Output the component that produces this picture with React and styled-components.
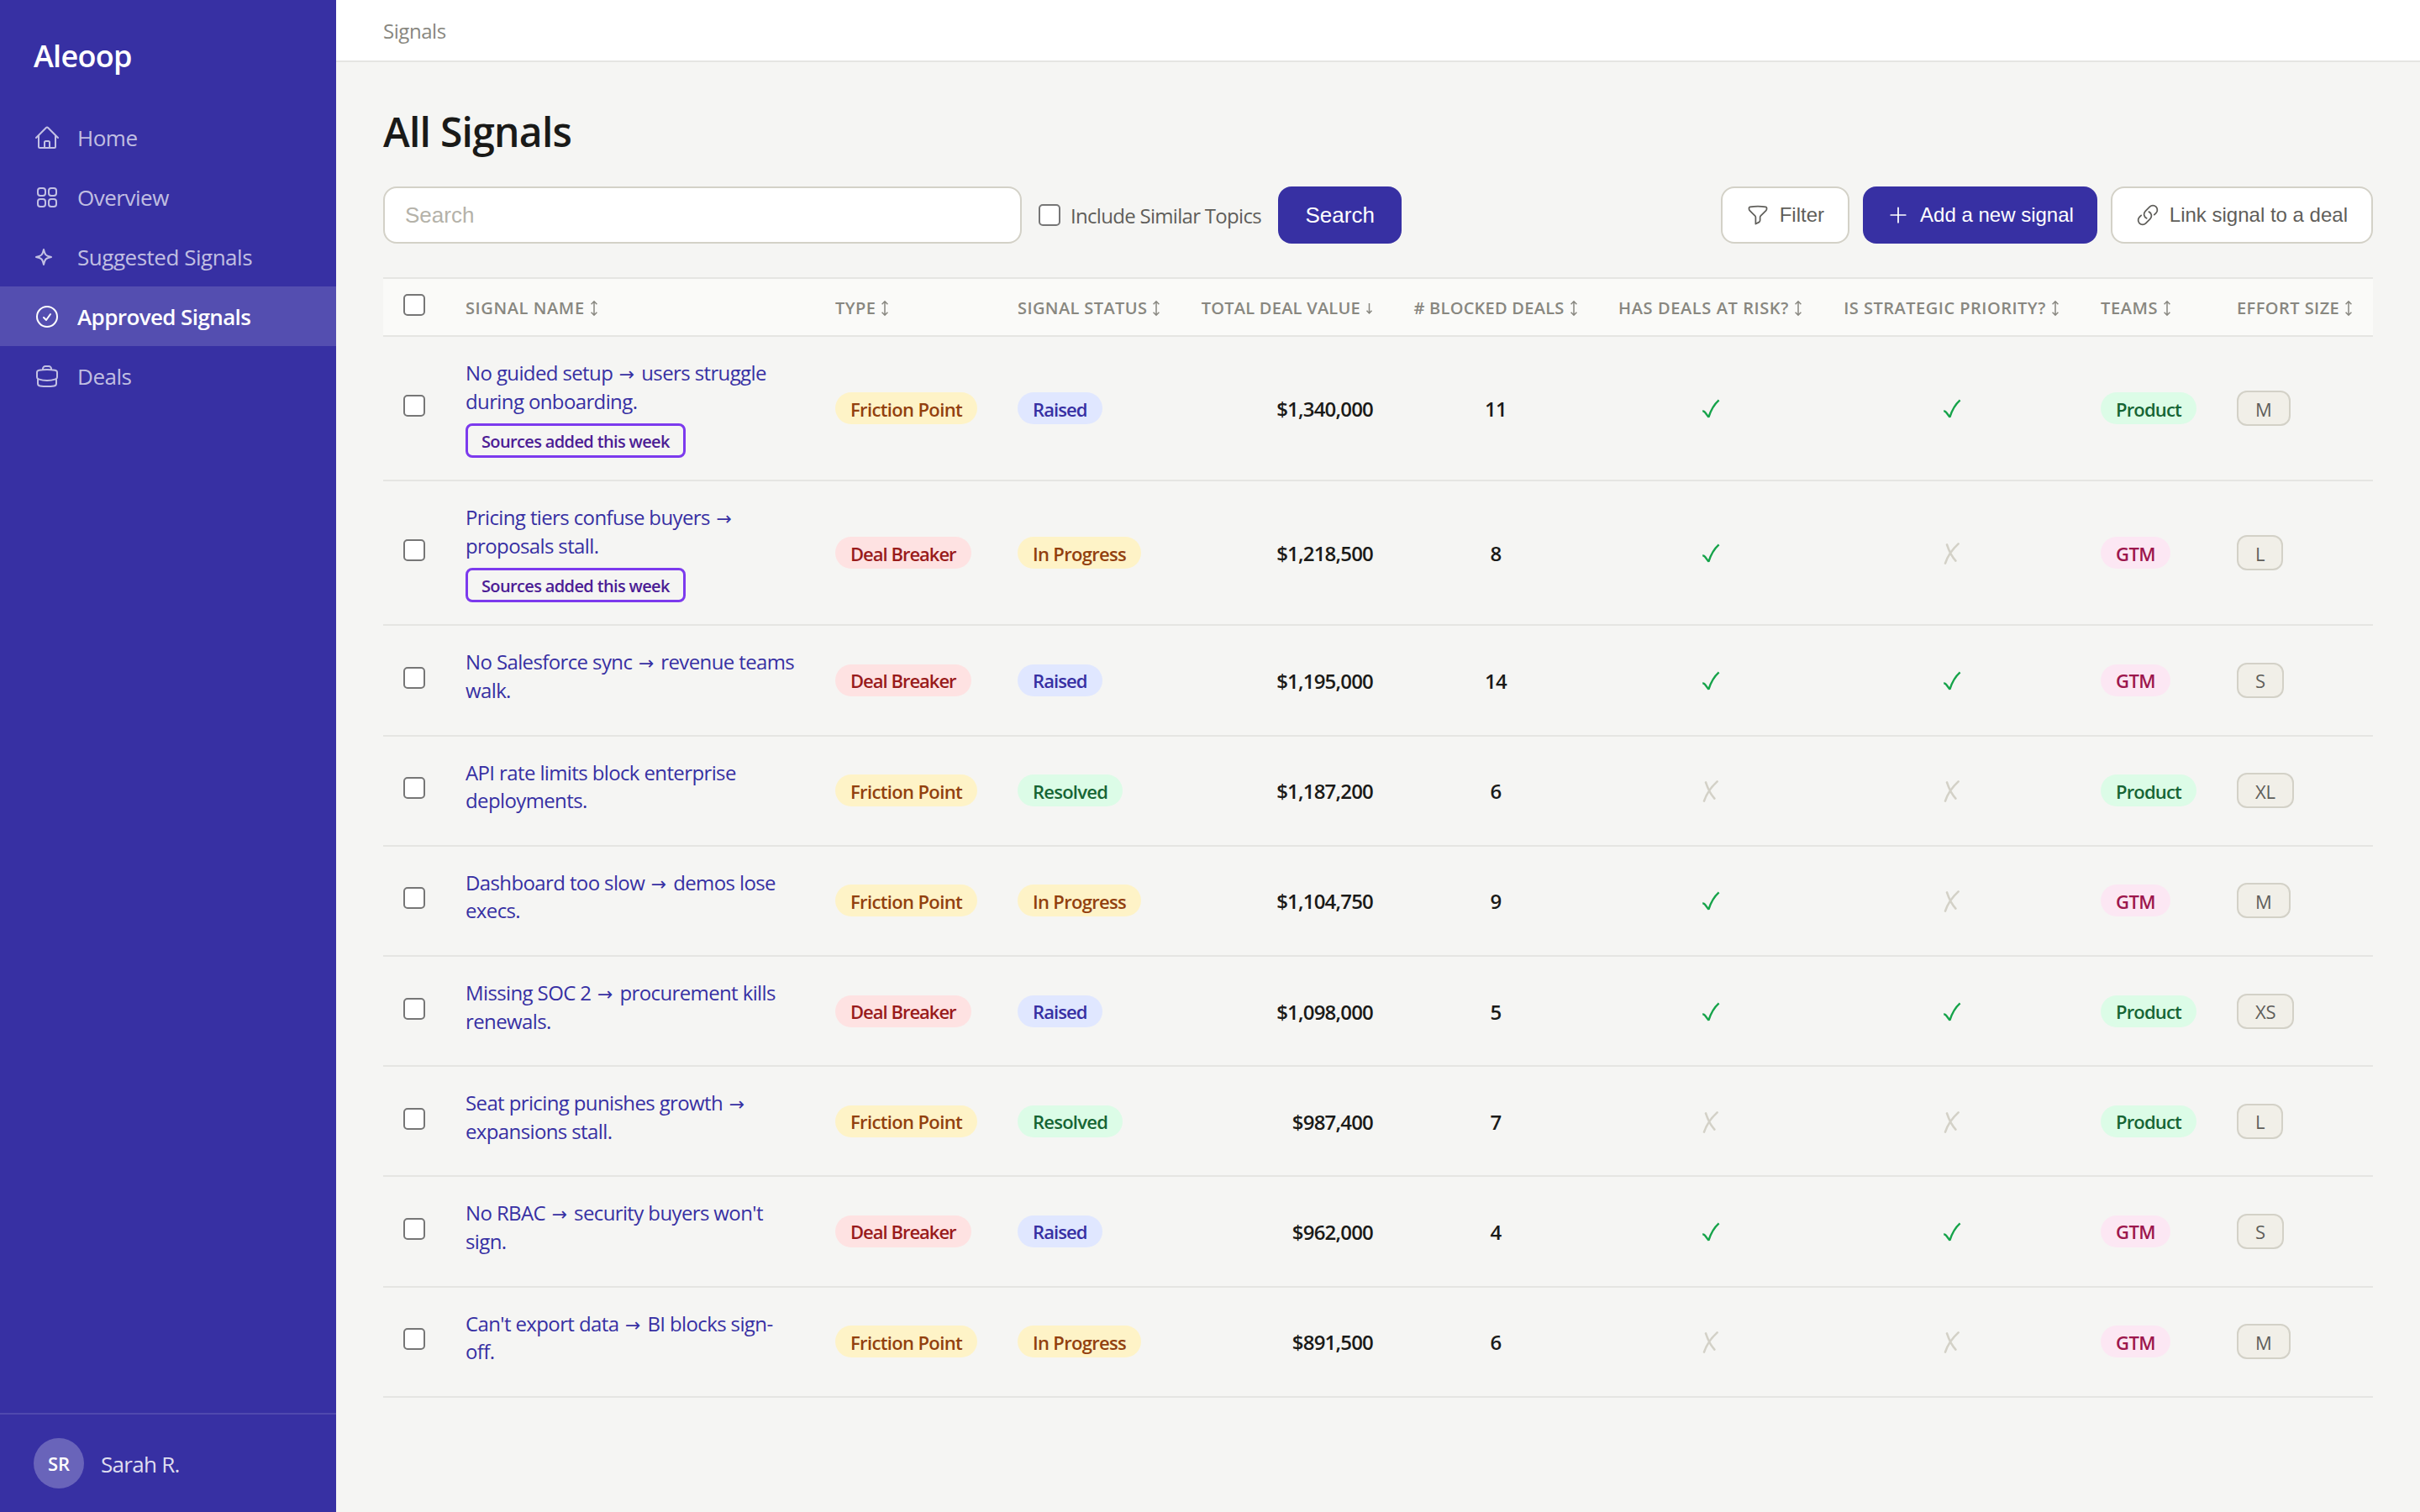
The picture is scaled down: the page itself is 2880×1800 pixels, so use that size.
import React, { useState } from 'react'
import styled, { createGlobalStyle } from 'styled-components'
import { HiOutlineHome, HiOutlineSquares2X2, HiOutlineCheckCircle, HiOutlineFunnel, HiOutlinePlus, HiOutlineLink } from 'react-icons/hi2'

const GlobalStyle = createGlobalStyle`
    * { box-sizing: border-box; }
    body {
        margin: 0;
        background: #f5f5f3;
        color: #1a1a18;
        font-family: "Open Sans", "Noto Sans", sans-serif;
        font-size: 24px;
    }
`;

const Layout = styled.div`
    display: flex;
    height: 1800px;
`;
const Sidebar = styled.aside`
    display: flex;
    flex-direction: column;
    flex: none;
    width: 400px;
    background: #3730a3;
    color: white;
`;
const Brand = styled.div`
    padding: 41px 40px 0;
    height: 128px;
    font-size: 36px;
    font-weight: 600;
    line-height: 52px;
    letter-spacing: -0.7px;
`;
const Nav = styled.nav`
    flex: 1;
`;
const NavItem = styled.a`
    display: flex;
    align-items: center;
    gap: 20px;
    height: 71px;
    padding: 0 40px;
    font-size: 26px;
    font-weight: ${p => p.$active ? 600 : 400};
    letter-spacing: ${p => p.$active ? '-0.6px' : '-0.48px'};
    color: ${p => p.$active ? 'white' : 'rgba(255, 255, 255, 0.7)'};
    background: ${p => p.$active ? 'rgba(255, 255, 255, 0.15)' : 'transparent'};
    cursor: pointer;
    svg {
        width: 32px;
        height: 32px;
    }
`;
const UserBox = styled.div`
    display: flex;
    align-items: center;
    gap: 20px;
    padding: 28px 40px;
    border-top: 2px solid rgba(255, 255, 255, 0.12);
    font-size: 26px;
    letter-spacing: -0.7px;
    color: rgba(255, 255, 255, 0.85);
`;
const UserName = styled.span`
    padding-top: 2px;
`;
const Avatar = styled.div`
    display: flex;
    align-items: center;
    justify-content: center;
    width: 60px;
    height: 60px;
    border-radius: 50%;
    background: rgba(255, 255, 255, 0.25);
    color: white;
    font-size: 22px;
    font-weight: 600;
    letter-spacing: 0;
`;
const Main = styled.main`
    flex: 1;
    min-width: 0;
`;
const TopBar = styled.header`
    display: flex;
    align-items: center;
    height: 74px;
    padding: 1px 56px 0;
    background: white;
    border-bottom: 2px solid #e5e5e2;
    color: #888780;
    letter-spacing: -0.45px;
`;
const Content = styled.section`
    padding: 49px 56px;
`;
const Title = styled.h1`
    margin: 0 0 31px;
    font-size: 48px;
    font-weight: 600;
    line-height: 68px;
    letter-spacing: -0.75px;
`;
const Toolbar = styled.div`
    display: flex;
    align-items: center;
    gap: 16px;
    margin-bottom: 40px;
`;
const SearchGroup = styled.div`
    display: flex;
    align-items: center;
    gap: 20px;
    margin-right: auto;
`;
const SearchInput = styled.input`
    width: 760px;
    height: 68px;
    padding: 0 24px;
    border: 2px solid #d3d1c7;
    border-radius: 16px;
    background: white;
    font-family: "Liberation Sans", Arial, sans-serif;
    font-size: 26px;
    &::placeholder {
        color: #b4b2a9;
    }
`;
const CheckLabel = styled.label`
    display: flex;
    align-items: center;
    gap: 12px;
    color: #5f5e5a;
    letter-spacing: -0.7px;
    white-space: nowrap;
`;
const CheckBox = styled.input.attrs({ type: 'checkbox' })`
    appearance: none;
    flex: none;
    width: 26px;
    height: 26px;
    margin: 0;
    border: 2px solid #767676;
    border-radius: 5px;
    background: white;
    &:checked {
        background: #3730a3;
    }
`;
const Button = styled.button`
    display: flex;
    align-items: center;
    gap: 12px;
    height: 68px;
    padding: 0 28px;
    border: ${p => p.$primary ? '0' : '2px solid #d3d1c7'};
    border-radius: 16px;
    background: ${p => p.$primary ? '#3730a3' : 'white'};
    color: ${p => p.$primary ? 'white' : '#5f5e5a'};
    font-family: "Liberation Sans", Arial, sans-serif;
    font-size: 24px;
    white-space: nowrap;
    cursor: pointer;
    svg {
        width: 28px;
        height: 28px;
    }
`;
const SearchButton = styled(Button)`
    padding: 0 32.5px;
    font-size: 26px;
`;
const columnGrid = `74px 440px 217px 218px 253px 244px 267px 307px 162px 186px`;
const TableHead = styled.div`
    display: grid;
    grid-template-columns: ${columnGrid};
    height: 71px;
    border-top: 2px solid #e5e5e2;
    border-bottom: 2px solid #e5e5e2;
    background: #fafaf8;
`;
const HeadCell = styled.div`
    display: flex;
    align-items: center;
    justify-content: ${p => p.$align || 'flex-start'};
    padding: 2px 24px 0;
    color: #888780;
    font-size: 20px;
    font-weight: 600;
    letter-spacing: ${p => p.$track}px;
    white-space: nowrap;
    cursor: pointer;
    svg {
        flex: none;
        margin-left: 6px;
    }
`;
const Row = styled.div`
    display: grid;
    grid-template-columns: ${columnGrid};
    height: ${p => p.$tall ? 172.2 : 131.2}px;
    border-bottom: 2px solid #e5e5e2;
`;
const Cell = styled.div`
    display: flex;
    align-items: center;
    justify-content: ${p => p.$align || 'flex-start'};
    padding: 0 24px;
`;
const CheckCell = styled(Cell)`
    padding-bottom: 6px;
`;
const MarkCell = styled(Cell)`
    padding-top: 2px;
    svg {
        margin-left: 1px;
    }
`;
const NameCell = styled.div`
    padding: 26px 20px 0 24px;
`;
const SignalLink = styled.a`
    display: block;
    color: #3730a3;
    line-height: 33.6px;
    letter-spacing: -0.62px;
    cursor: pointer;
`;
const Arrow = styled.span`
    margin: 0 3px 0 2px;
    font-family: "DejaVu Sans", sans-serif;
    font-size: 22px;
    line-height: 1;
`;
const SourcesTag = styled.span`
    display: inline-flex;
    align-items: center;
    height: 41px;
    margin-top: 10px;
    padding: 2px 16px 0;
    border: 3px solid #7c3aed;
    border-radius: 8px;
    color: #4c1d95;
    font-size: 20px;
    font-weight: 600;
    letter-spacing: -0.64px;
`;
const Badge = styled.span`
    display: flex;
    align-items: center;
    height: 38px;
    padding: 1px 18px 0;
    border-radius: 20px;
    background: ${p => p.$tone.bg};
    color: ${p => p.$tone.fg};
    font-size: 22px;
    font-weight: 600;
    letter-spacing: ${p => p.$tone.track}px;
    white-space: nowrap;
`;
const Amount = styled.span`
    padding-top: 1px;
    font-weight: 600;
    letter-spacing: -0.8px;
`;
const SizeBox = styled.span`
    display: flex;
    align-items: center;
    height: 42px;
    padding: 1px 20px 0;
    border: 2px solid #d3d1c7;
    border-radius: 12px;
    background: #f1efe8;
    color: #5f5e5a;
    font-size: 22px;
    letter-spacing: -0.2px;
`;

const tones = {
    'Friction Point': { bg: '#fef3c7', fg: '#92400e', track: -0.64 },
    'Deal Breaker': { bg: '#fee2e2', fg: '#991b1b', track: -1 },
    'Raised': { bg: '#e0e7ff', fg: '#3730a3', track: -0.9 },
    'In Progress': { bg: '#fef3c7', fg: '#92400e', track: -0.69 },
    'Resolved': { bg: '#dcfce7', fg: '#166534', track: -0.75 },
    'Product': { bg: '#dcfce7', fg: '#166534', track: -0.83 },
    'GTM': { bg: '#fce7f3', fg: '#9d174d', track: -0.57 },
}

const columns = [
    { label: 'SIGNAL NAME', track: 0.6 },
    { label: 'TYPE', track: 0.4 },
    { label: 'SIGNAL STATUS', track: 0.4 },
    { label: 'TOTAL DEAL VALUE', track: 0.25, align: 'flex-end', sorted: true },
    { label: '# BLOCKED DEALS', track: 0.25, align: 'center' },
    { label: 'HAS DEALS AT RISK?', track: 0.6, align: 'center' },
    { label: 'IS STRATEGIC PRIORITY?', track: 0.5, align: 'center' },
    { label: 'TEAMS', track: 0.6 },
    { label: 'EFFORT SIZE', track: 0.45 },
]

const signals = [
    { name: 'No guided setup → users struggle during onboarding.', fresh: true, type: 'Friction Point', status: 'Raised', value: '$1,340,000', blocked: 11, risk: true, strategic: true, team: 'Product', size: 'M' },
    { name: 'Pricing tiers confuse buyers → proposals stall.', fresh: true, type: 'Deal Breaker', status: 'In Progress', value: '$1,218,500', blocked: 8, risk: true, strategic: false, team: 'GTM', size: 'L' },
    { name: 'No Salesforce sync → revenue teams walk.', type: 'Deal Breaker', status: 'Raised', value: '$1,195,000', blocked: 14, risk: true, strategic: true, team: 'GTM', size: 'S' },
    { name: 'API rate limits block enterprise deployments.', type: 'Friction Point', status: 'Resolved', value: '$1,187,200', blocked: 6, risk: false, strategic: false, team: 'Product', size: 'XL' },
    { name: 'Dashboard too slow → demos lose execs.', type: 'Friction Point', status: 'In Progress', value: '$1,104,750', blocked: 9, risk: true, strategic: false, team: 'GTM', size: 'M' },
    { name: 'Missing SOC 2 → procurement kills renewals.', type: 'Deal Breaker', status: 'Raised', value: '$1,098,000', blocked: 5, risk: true, strategic: true, team: 'Product', size: 'XS' },
    { name: 'Seat pricing punishes growth → expansions stall.', type: 'Friction Point', status: 'Resolved', value: '$987,400', blocked: 7, risk: false, strategic: false, team: 'Product', size: 'L' },
    { name: "No RBAC → security buyers won't sign.", type: 'Deal Breaker', status: 'Raised', value: '$962,000', blocked: 4, risk: true, strategic: true, team: 'GTM', size: 'S' },
    { name: "Can't export data → BI blocks sign-off.", type: 'Friction Point', status: 'In Progress', value: '$891,500', blocked: 6, risk: false, strategic: false, team: 'GTM', size: 'M' },
]

const StarIcon = () => (
    <svg viewBox="0 0 24 24" fill="none" stroke="currentColor" strokeWidth="1.5" strokeLinecap="round" strokeLinejoin="round">
        <path d="M9.813 15.904 9 18.75l-.813-2.846a4.5 4.5 0 0 0-3.09-3.09L2.25 12l2.846-.813a4.5 4.5 0 0 0 3.09-3.09L9 5.25l.813 2.846a4.5 4.5 0 0 0 3.09 3.09L15.75 12l-2.846.813a4.5 4.5 0 0 0-3.09 3.09Z" />
    </svg>
)

const BriefcaseIcon = () => (
    <svg viewBox="0 0 24 24" fill="none" stroke="currentColor" strokeWidth="1.5" strokeLinecap="round" strokeLinejoin="round">
        <path d="M20.25 14.15v4.25c0 1.094-.787 2.036-1.872 2.18-2.087.277-4.216.42-6.378.42s-4.291-.143-6.378-.42c-1.085-.144-1.872-1.086-1.872-2.18v-4.25m16.5 0a2.18 2.18 0 0 0 .75-1.661V8.706c0-1.081-.768-2.015-1.837-2.175a48.114 48.114 0 0 0-3.413-.387m4.5 8.006c-.194.165-.42.295-.673.38A23.978 23.978 0 0 1 12 15.75c-2.648 0-5.195-.429-7.577-1.22a2.016 2.016 0 0 1-.673-.38m0 0A2.18 2.18 0 0 1 3 12.489V8.706c0-1.081.768-2.015 1.837-2.175a48.111 48.111 0 0 1 3.413-.387m7.5 0V5.25A2.25 2.25 0 0 0 13.5 3h-3a2.25 2.25 0 0 0-2.25 2.25v.894m7.5 0a48.667 48.667 0 0 0-7.5 0" />
    </svg>
)

const SortIcon = ({ sorted }) => (
    <svg width={sorted ? 9 : 10} height="20" viewBox={sorted ? '0.5 0 9 20' : '0 0 10 20'} fill="none" stroke="currentColor" strokeWidth="1.5">
        {sorted
            ? <path d="M5 4v12M2 12.8 5 16l3-3.2" />
            : <path d="M5 2v16M1.6 5.2 5 1.8l3.4 3.4M1.6 14.8 5 18.2l3.4-3.4" />
        }
    </svg>
)

const Mark = ({ on }) => on ? (
    <svg width="22" height="24" viewBox="0 0 22 24" fill="none" stroke="#16a34a" strokeWidth="2.4">
        <path d="M1.2 14.6c1.2-.2 2 .2 2.8 1.2L8.4 21.6C10.6 14.6 14.6 6.8 20.6 1.4" strokeLinejoin="bevel" />
    </svg>
) : (
    <svg width="20" height="26" viewBox="0 0 20 26" fill="none" stroke="#d3d1c7" strokeWidth="2.6" strokeLinecap="round">
        <path d="M4 2.4C6.4 9.6 10 16.8 14.4 21.6M17.6 1.4C10.4 8 5 15.6 2 24.6" />
    </svg>
)

const navItems = [
    { label: 'Home', icon: <HiOutlineHome /> },
    { label: 'Overview', icon: <HiOutlineSquares2X2 /> },
    { label: 'Suggested Signals', icon: <StarIcon /> },
    { label: 'Approved Signals', icon: <HiOutlineCheckCircle /> },
    { label: 'Deals', icon: <BriefcaseIcon /> },
]

const SignalName = ({ name }) => {
    const [before, after] = name.split('→')
    if (after === undefined) return name
    return <>{before}<Arrow>→</Arrow>{after}</>
}

const SignalRow = ({ signal }) => {
    const { name, fresh, type, status, value, blocked, risk, strategic, team, size } = signal
    return (
        <Row $tall={fresh}>
            <CheckCell><CheckBox /></CheckCell>
            <NameCell>
                <SignalLink><SignalName name={name} /></SignalLink>
                {fresh && <SourcesTag>Sources added this week</SourcesTag>}
            </NameCell>
            <Cell><Badge $tone={tones[type]}>{type}</Badge></Cell>
            <Cell><Badge $tone={tones[status]}>{status}</Badge></Cell>
            <Cell $align="flex-end"><Amount>{value}</Amount></Cell>
            <Cell $align="center"><Amount>{blocked}</Amount></Cell>
            <MarkCell $align="center"><Mark on={risk} /></MarkCell>
            <MarkCell $align="center"><Mark on={strategic} /></MarkCell>
            <Cell><Badge $tone={tones[team]}>{team}</Badge></Cell>
            <Cell><SizeBox>{size}</SizeBox></Cell>
        </Row>
    )
}

export default function App() {
    const [active, setActive] = useState('Approved Signals')
    const [search, setSearch] = useState('')
    return (
        <Layout>
            <GlobalStyle />
            <Sidebar>
                <Brand>Aleoop</Brand>
                <Nav>
                    {navItems.map(({ label, icon }) => (
                        <NavItem key={label} $active={label === active} onClick={() => setActive(label)}>
                            {icon}
                            {label}
                        </NavItem>
                    ))}
                </Nav>
                <UserBox>
                    <Avatar>SR</Avatar>
                    <UserName>Sarah R.</UserName>
                </UserBox>
            </Sidebar>
            <Main>
                <TopBar>Signals</TopBar>
                <Content>
                    <Title>All Signals</Title>
                    <Toolbar>
                        <SearchGroup>
                            <SearchInput placeholder="Search" value={search} onChange={(e) => setSearch(e.target.value)} />
                            <CheckLabel><CheckBox />Include Similar Topics</CheckLabel>
                            <SearchButton $primary>Search</SearchButton>
                        </SearchGroup>
                        <Button><HiOutlineFunnel />Filter</Button>
                        <Button $primary><HiOutlinePlus />Add a new signal</Button>
                        <Button><HiOutlineLink />Link signal to a deal</Button>
                    </Toolbar>
                    <TableHead>
                        <CheckCell><CheckBox /></CheckCell>
                        {columns.map(({ label, track, align, sorted }) => (
                            <HeadCell key={label} $track={track} $align={align}>
                                {label}
                                <SortIcon sorted={sorted} />
                            </HeadCell>
                        ))}
                    </TableHead>
                    {signals.map(signal => <SignalRow key={signal.name} signal={signal} />)}
                </Content>
            </Main>
        </Layout>
    )
}
